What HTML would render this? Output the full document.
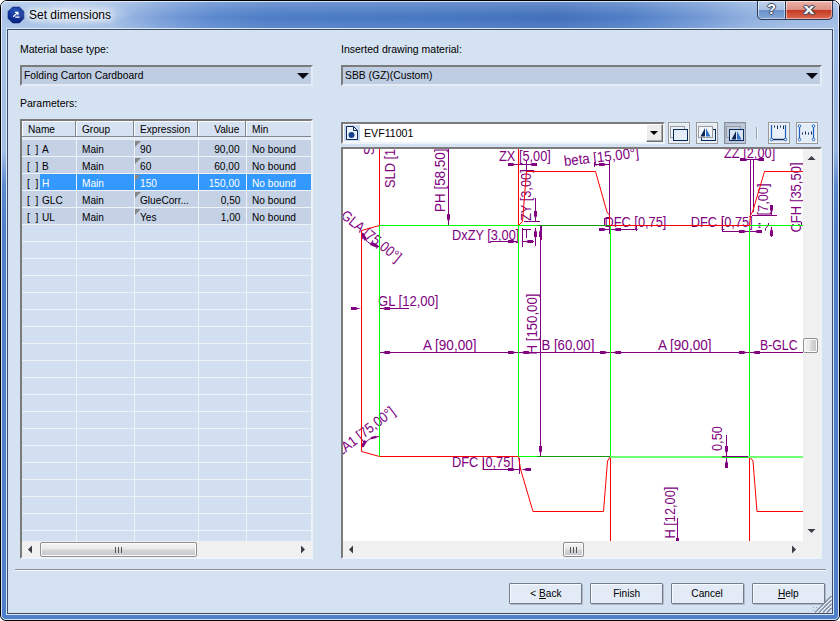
<!DOCTYPE html>
<html>
<head>
<meta charset="utf-8">
<title>Set dimensions</title>
<style>
html,body{margin:0;padding:0;}
body{width:840px;height:621px;overflow:hidden;position:relative;background:#fff;font-family:"Liberation Sans",sans-serif;font-size:11px;color:#000;}
.abs{position:absolute;}
#frame{left:0;top:0;width:838px;height:619px;border:1px solid #000;border-radius:7px 7px 6px 6px;background:linear-gradient(to bottom,#a6c1e6 0,#a3bfe5 150px,#5c89cf 185px,#4f7fc8 230px,#4f7fc8 100%);overflow:hidden;}
#frameR{left:800px;top:0;width:38px;height:619px;background:linear-gradient(to bottom,#9dbae3 0,#98b6e1 150px,#5c89cf 185px,#4f7fc8 230px,#4f7fc8 100%);}
#titlebg{left:0;top:0;width:838px;height:28px;background:linear-gradient(to right,#a9c3e7 0,#a3bfe5 13%,#7a9fd8 19%,#5c89cf 25%,#4d7dc6 32%,#4777c2 52%,#4170bb 66%,#4f7ec6 75%,#7097d4 83%,#8eafde 89%,#9dbae3 94%,#a0bce4 100%);}
#titlehi{left:0;top:0;width:838px;height:28px;background:linear-gradient(to bottom,rgba(255,255,255,.22) 0,rgba(255,255,255,.06) 40%,rgba(255,255,255,0) 60%,rgba(255,255,255,.10) 100%);}
#titlefade{left:0;top:28px;width:838px;height:8px;}
#frame2{left:1px;top:1px;width:836px;height:617px;border:1px solid rgba(235,243,252,.85);border-radius:6px 6px 5px 5px;}
#clientedge{left:6px;top:28px;width:826px;height:585px;border:1px solid #dbe8f8;}
#client{left:7px;top:29px;width:824px;height:583px;border:1px solid #3c4c66;background:#d5e2f2;}
#title{left:29px;top:8px;font-size:12px;line-height:15px;color:#000;white-space:nowrap;text-shadow:0 0 6px #fff,0 0 6px #fff,0 0 10px #fff;}
.capg{text-align:center;color:#fff;font-weight:bold;line-height:17px;text-shadow:-1px 0 #45506a,1px 0 #45506a,0 -1px #45506a,0 1px #45506a,0 0 2px #222;}
.lbl{font-size:11px;line-height:13px;white-space:nowrap;}
.lbl.t{transform:scaleX(.955);}
.combo .t{transform:scaleX(.94);}
.combo{height:17px;border:2px solid;border-color:#7b7b7b #e4ebf5 #e4ebf5 #7b7b7b;background:#bfcde2;}
.combo span{position:absolute;left:2px;top:2px;font-size:11px;line-height:13px;white-space:nowrap;}
.arrow{width:0;height:0;border-left:6px solid transparent;border-right:6px solid transparent;border-top:6px solid #0a0a14;}
/* table */
#tbl{left:20px;top:119px;width:289px;height:436px;border:2px solid;border-color:#7b7b7b #eef3fa #eef3fa #7b7b7b;background:#d2dff0;overflow:hidden;}
.hdr{top:0;height:15px;background:#d6e2f2;border-right:1px solid #808894;border-bottom:1px solid #808894;box-shadow:inset 1px 1px 0 #fbfdff;font-size:11px;line-height:17px;z-index:2;}
.hdr:nth-child(6){border-right:none;width:65px !important;}
#hband{left:0;top:16px;width:289px;height:3px;background:#e6edf7;}
.row{left:0;width:289px;height:16px;border-bottom:1px solid #eef3fa;font-size:11px;line-height:16px;}
.cell{position:absolute;top:0;height:16px;line-height:18px;white-space:nowrap;overflow:hidden;}
.vline{top:16px;width:1px;height:405px;background:#eef3fa;z-index:1;}
.tri{position:absolute;left:0;top:1px;width:0;height:0;border-top:6px solid #868686;border-right:6px solid transparent;}
.row.data{background:#c5d2e6;}
.row.sel{background:#3399ff;color:#fff;}
.row.sel .c0{background:#c5d2e6;color:#000;}
.row.sel .c0 .nm{background:#3399ff;color:#fff;}
.br{margin-left:5px;}
.t{display:inline-block;transform:scaleX(.92);transform-origin:0 50%;white-space:nowrap;}
.tr{transform-origin:100% 50%;}
.tc{transform-origin:50% 50%;}
.nm{display:inline-block;margin-left:1px;padding-left:2px;height:16px;vertical-align:top;}
.row.sel .nm{width:35px;}
.grip{width:7px;height:6px;background:linear-gradient(to right,#555 0,#555 1px,transparent 1px,transparent 3px,#555 3px,#555 4px,transparent 4px,transparent 6px,#555 6px,#555 7px);}
.tb{width:20px;height:20px;border:1px solid #9a9a9a;background:#e4ecf6;box-shadow:inset 0 0 0 1px #eef3fa;}
.tb.on{background:#bcc8dc;border-color:#8a8f9a;box-shadow:inset 1px 1px 0 #aab6ca;}
.tb svg{position:absolute;left:-1px;top:0;}
.thumbv{border:1px solid #8e8f90;border-radius:2px;background:linear-gradient(to right,#f5f5f5 0,#e9e9ea 45%,#d6d6d8 55%,#c6c7c9 100%);box-shadow:inset 0 0 0 1px #fcfcfc;}
.btn{top:583px;width:71px;height:19px;border:1px solid #767c88;border-radius:1px;background:#e3ebf7;box-shadow:inset 1px 1px 0 #f8fbff,1px 1px 0 #aeb9cb;font-size:11px;line-height:19px;text-align:center;}
.sbh{background:#f0f0f0;}
.thumb{border:1px solid #8e8f90;border-radius:2px;background:linear-gradient(to bottom,#f5f5f5 0,#e9e9ea 45%,#d6d6d8 55%,#c6c7c9 100%);box-shadow:inset 0 0 0 1px #fcfcfc;}
</style>
</head>
<body>
<div id="frame" class="abs"><div id="frameR" class="abs"></div><div id="titlebg" class="abs"></div><div id="titlehi" class="abs"></div></div>
<div id="frame2" class="abs"></div>
<div id="clientedge" class="abs"></div>
<div id="client" class="abs"></div>

<!-- title bar -->
<svg class="abs" style="left:7px;top:6px" width="18" height="18" viewBox="0 0 18 18">
  <defs><radialGradient id="ig" cx="45%" cy="25%" r="85%"><stop offset="0" stop-color="#2a56b8"/><stop offset="0.6" stop-color="#0d2f96"/><stop offset="1" stop-color="#061a6a"/></radialGradient></defs>
  <path d="M5.6 1 H12.4 L17 5.6 V12.4 L12.4 17 H5.6 L1 12.4 V5.6 Z" fill="url(#ig)" stroke="#0a2278" stroke-width="0.6" stroke-linejoin="round"/>
  <path d="M6.2 10.8 L10.6 6.6 M8 6.3 H10.9 V9.2 M8.3 11.2 H12.6" stroke="#fff" stroke-width="1.25" fill="none"/>
</svg>
<div class="abs" style="left:14px;top:2px;width:118px;height:25px;background:radial-gradient(ellipse at center,rgba(255,255,255,.5) 0,rgba(255,255,255,.28) 40%,rgba(255,255,255,0) 72%);"></div>
<div id="title" class="abs">Set dimensions</div>

<!-- caption buttons -->
<div id="capbtns" class="abs" style="left:757px;top:1px;width:74px;height:18px;border:1px solid #2a3a58;border-top:none;border-radius:0 0 5px 5px;overflow:hidden;background:#2a3a58;">
  <div class="abs" style="left:0;top:0;width:27px;height:18px;background:linear-gradient(to bottom,#c0d2ec 0,#a9c0e2 50%,#6c91cb 52%,#86a8d9 100%);box-shadow:inset 1px 1px 0 rgba(255,255,255,.6),inset -1px -1px 0 rgba(255,255,255,.45);border-radius:0 0 0 4px;"></div>
  <div class="abs" style="left:28px;top:0;width:46px;height:18px;background:linear-gradient(to bottom,#edb4ab 0,#dc8d82 50%,#c63a23 52%,#dc6a52 100%);box-shadow:inset 1px 1px 0 rgba(255,255,255,.5),inset -1px -1px 0 rgba(255,255,255,.45);border-radius:0 0 4px 0;"></div>
  <div class="abs capg" style="left:0;width:27px;top:0px;font-size:14px;">?</div>
  <div class="abs capg" style="left:28px;width:46px;top:-1px;font-size:15px;transform:scaleX(1.3);">x</div>
</div>

<!-- left column -->
<div class="abs lbl t" style="left:20px;top:43px;">Material base type:</div>
<div class="abs combo" style="left:20px;top:65px;width:289px;"><span class="t">Folding Carton Cardboard</span><div class="abs arrow" style="left:275px;top:6px;"></div></div>
<div class="abs lbl t" style="left:20px;top:97px;">Parameters:</div>

<div id="tbl" class="abs">
  <div id="hband" class="abs"></div>
  <div class="abs hdr" style="left:0px;width:53px;"><span class="t" style="margin-left:6px">Name</span></div>
  <div class="abs hdr" style="left:54px;width:57px;"><span class="t" style="margin-left:6px">Group</span></div>
  <div class="abs hdr" style="left:112px;width:63px;"><span class="t" style="margin-left:6px">Expression</span></div>
  <div class="abs hdr" style="left:176px;width:47px;text-align:right;"><span class="t tr" style="margin-right:6px">Value</span></div>
  <div class="abs hdr" style="left:224px;width:65px;"><span class="t" style="margin-left:6px">Min</span></div>
  <div class="abs vline" style="left:54px;"></div>
  <div class="abs vline" style="left:112px;"></div>
  <div class="abs vline" style="left:176px;"></div>
  <div class="abs vline" style="left:224px;"></div>
  <div class="abs row data" style="top:19px;"><div class="cell c0" style="left:0;width:54px;"><span class="br t">[&nbsp;&nbsp;]</span><span class="nm"><span class="t">A</span></span></div><div class="cell" style="left:55px;width:57px;"><span class="t" style="margin-left:5px">Main</span></div><div class="cell" style="left:113px;width:63px;"><i class="tri"></i><span class="t" style="margin-left:5px">90</span></div><div class="cell" style="left:177px;width:47px;text-align:right;"><span class="t tr" style="margin-right:6px">90,00</span></div><div class="cell" style="left:225px;width:65px;"><span class="t" style="margin-left:5px">No bound</span></div></div>
  <div class="abs row data" style="top:36px;"><div class="cell c0" style="left:0;width:54px;"><span class="br t">[&nbsp;&nbsp;]</span><span class="nm"><span class="t">B</span></span></div><div class="cell" style="left:55px;width:57px;"><span class="t" style="margin-left:5px">Main</span></div><div class="cell" style="left:113px;width:63px;"><i class="tri"></i><span class="t" style="margin-left:5px">60</span></div><div class="cell" style="left:177px;width:47px;text-align:right;"><span class="t tr" style="margin-right:6px">60,00</span></div><div class="cell" style="left:225px;width:65px;"><span class="t" style="margin-left:5px">No bound</span></div></div>
  <div class="abs row sel" style="top:53px;"><div class="cell c0" style="left:0;width:54px;"><span class="br t">[&nbsp;&nbsp;]</span><span class="nm"><span class="t">H</span></span></div><div class="cell" style="left:55px;width:57px;"><span class="t" style="margin-left:5px">Main</span></div><div class="cell" style="left:113px;width:63px;"><i class="tri"></i><span class="t" style="margin-left:5px">150</span></div><div class="cell" style="left:177px;width:47px;text-align:right;"><span class="t tr" style="margin-right:6px">150,00</span></div><div class="cell" style="left:225px;width:65px;"><span class="t" style="margin-left:5px">No bound</span></div></div>
  <div class="abs row data" style="top:70px;"><div class="cell c0" style="left:0;width:54px;"><span class="br t">[&nbsp;&nbsp;]</span><span class="nm"><span class="t">GLC</span></span></div><div class="cell" style="left:55px;width:57px;"><span class="t" style="margin-left:5px">Main</span></div><div class="cell" style="left:113px;width:63px;"><i class="tri"></i><span class="t" style="margin-left:5px">GlueCorr...</span></div><div class="cell" style="left:177px;width:47px;text-align:right;"><span class="t tr" style="margin-right:6px">0,50</span></div><div class="cell" style="left:225px;width:65px;"><span class="t" style="margin-left:5px">No bound</span></div></div>
  <div class="abs row data" style="top:87px;"><div class="cell c0" style="left:0;width:54px;"><span class="br t">[&nbsp;&nbsp;]</span><span class="nm"><span class="t">UL</span></span></div><div class="cell" style="left:55px;width:57px;"><span class="t" style="margin-left:5px">Main</span></div><div class="cell" style="left:113px;width:63px;"><i class="tri"></i><span class="t" style="margin-left:5px">Yes</span></div><div class="cell" style="left:177px;width:47px;text-align:right;"><span class="t tr" style="margin-right:6px">1,00</span></div><div class="cell" style="left:225px;width:65px;"><span class="t" style="margin-left:5px">No bound</span></div></div>
  <div class="abs row" style="top:104px;"></div>
  <div class="abs row" style="top:121px;"></div>
  <div class="abs row" style="top:138px;"></div>
  <div class="abs row" style="top:155px;"></div>
  <div class="abs row" style="top:172px;"></div>
  <div class="abs row" style="top:189px;"></div>
  <div class="abs row" style="top:206px;"></div>
  <div class="abs row" style="top:223px;"></div>
  <div class="abs row" style="top:240px;"></div>
  <div class="abs row" style="top:257px;"></div>
  <div class="abs row" style="top:274px;"></div>
  <div class="abs row" style="top:291px;"></div>
  <div class="abs row" style="top:308px;"></div>
  <div class="abs row" style="top:325px;"></div>
  <div class="abs row" style="top:342px;"></div>
  <div class="abs row" style="top:359px;"></div>
  <div class="abs row" style="top:376px;"></div>
  <div class="abs row" style="top:393px;"></div>
  <div class="abs row" style="top:410px;"></div>
  <div class="abs sbh" style="left:0;top:420px;width:289px;height:16px;">
    <svg class="abs" style="left:5px;top:4px" width="6" height="9" viewBox="0 0 6 9"><path d="M5 0.5 L5 8.5 L1 4.5 Z" fill="#3a3d44"/></svg>
    <div class="abs thumb" style="left:18px;top:1px;width:155px;height:13px;"><div class="abs grip" style="left:74px;top:4px;"></div></div>
    <svg class="abs" style="left:278px;top:4px" width="6" height="9" viewBox="0 0 6 9"><path d="M1 0.5 L1 8.5 L5 4.5 Z" fill="#3a3d44"/></svg>
  </div>
</div>

<!-- right column -->
<div class="abs lbl t" style="left:341px;top:43px;">Inserted drawing material:</div>
<div class="abs combo" style="left:341px;top:65px;width:477px;"><span class="t">SBB (GZ)(Custom)</span><div class="abs arrow" style="left:463px;top:6px;"></div></div>


<!-- drawing combo -->
<div class="abs" style="left:341px;top:122px;width:320px;height:18px;border:2px solid;border-color:#7b7b7b #eef3fa #eef3fa #7b7b7b;background:#fff;">
  <div class="abs" style="left:1px;top:1px;width:16px;height:16px;background:#c9d9ee;"></div>
  <svg class="abs" style="left:1px;top:1px" width="16" height="16" viewBox="0 0 16 16">
    <path d="M2.5 1.5 H9.5 L13.5 5.5 V14.5 H2.5 Z" fill="#eef3fa" stroke="#0b2a5c" stroke-width="1"/>
    <path d="M9.5 1.5 V5.5 H13.5" fill="none" stroke="#0b2a5c" stroke-width="1"/>
    <circle cx="7.5" cy="10" r="3" fill="#123e8c"/>
  </svg>
  <span class="abs t" style="left:21px;top:3px;font-size:11px;line-height:13px;transform:scaleX(.965);">EVF11001</span>
  <div class="abs" style="left:303px;top:0;width:15px;height:16px;border:1px solid;border-color:#fff #707070 #707070 #fff;background:#ececec;box-shadow:inset -1px -1px 0 #a8a8a8;">
    <div class="abs" style="left:3px;top:6px;width:0;height:0;border-left:4px solid transparent;border-right:4px solid transparent;border-top:4px solid #000;"></div>
  </div>
</div>

<!-- toolbar buttons -->
<div class="abs tb" style="left:668px;top:122px;">
  <svg width="20" height="20" viewBox="0 0 20 20"><rect x="2.5" y="3.5" width="14" height="11" fill="#e9f0f8" stroke="#9c9c9c"/><rect x="5.5" y="6.5" width="14" height="11" fill="#e4edf7" stroke="#0b2a5c" stroke-width="1"/></svg>
</div>
<div class="abs tb" style="left:696px;top:122px;">
  <svg width="20" height="20" viewBox="0 0 20 20"><rect x="5.5" y="6.5" width="14" height="11" fill="#e4edf7" stroke="#0b2a5c" stroke-width="1"/><rect x="2.5" y="3.5" width="14" height="11" fill="#f1f5fa" stroke="#9c9c9c"/><path d="M9 5 V13.5 H4.5 Z" fill="#0b2350"/><path d="M10 5 V13.5 H14.5 Z" fill="#2d6fc4"/></svg>
</div>
<div class="abs tb on" style="left:724px;top:122px;">
  <svg width="20" height="20" viewBox="0 0 20 20"><rect x="2.5" y="3.5" width="14" height="11" fill="#c3cede" stroke="#9c9c9c"/><rect x="5.5" y="6.5" width="14" height="11" fill="#d9e4f2" stroke="#0b2a5c" stroke-width="1"/><path d="M12 8 V16.5 H7.5 Z" fill="#0b2350"/><path d="M13 8 V16.5 H17.5 Z" fill="#2d6fc4"/></svg>
</div>
<div class="abs" style="left:756px;top:127px;width:1px;height:12px;background:#9aa3b0;"></div>
<div class="abs" style="left:757px;top:127px;width:1px;height:12px;background:#f2f6fb;"></div>
<div class="abs tb" style="left:768px;top:122px;">
  <svg width="20" height="20" viewBox="0 0 20 20"><path d="M3.5 2 V16.5 H17.5 V2" fill="#e9f0f8" stroke="#1e5fbe" stroke-width="1.2"/><path d="M3.5 16.5 H17.5" stroke="#0b2a5c" stroke-width="1.4"/><path d="M6.5 2.5 V4.5 M9.5 2.5 V6 M12.5 2.5 V4.5 M15.5 2.5 V6" stroke="#0b2a5c" stroke-width="1"/><circle cx="3.5" cy="16.5" r="1.3" fill="#fff" stroke="#1e5fbe" stroke-width="0.9"/><circle cx="17.5" cy="16.5" r="1.3" fill="#fff" stroke="#1e5fbe" stroke-width="0.9"/></svg>
</div>
<div class="abs tb" style="left:796px;top:122px;">
  <svg width="20" height="20" viewBox="0 0 20 20"><path d="M3.5 3 V16.5 M17.5 3 V16.5" stroke="#1e5fbe" stroke-width="1.2"/><path d="M6.5 9.5 V11.5 M9.5 8.5 V11.5 M12.5 9.5 V11.5 M15.5 8.5 V11.5" stroke="#0b2a5c" stroke-width="1"/><circle cx="3.5" cy="3" r="1.3" fill="#fff" stroke="#1e5fbe" stroke-width="0.9"/><circle cx="17.5" cy="3" r="1.3" fill="#fff" stroke="#1e5fbe" stroke-width="0.9"/><circle cx="3.5" cy="16.5" r="1.3" fill="#fff" stroke="#1e5fbe" stroke-width="0.9"/><circle cx="17.5" cy="16.5" r="1.3" fill="#fff" stroke="#1e5fbe" stroke-width="0.9"/></svg>
</div>

<!-- drawing panel -->
<div id="panel" class="abs" style="left:341px;top:147px;width:477px;height:408px;border:2px solid;border-color:#7b7b7b #eef3fa #eef3fa #7b7b7b;background:#eaeff6;"></div>
<svg id="dwg" class="abs" style="left:343px;top:149px;" width="460" height="392" viewBox="343 149 460 392">
  <rect x="343" y="149" width="460" height="392" fill="#fff"/>
  <text x="373.5" y="155" font-size="14.5" fill="#800080" text-anchor="start" transform="rotate(-90 373.5 155)" textLength="8.5" lengthAdjust="spacingAndGlyphs">S</text>
  <text x="395" y="188" font-size="14.5" fill="#800080" text-anchor="start" transform="rotate(-90 395 188)" textLength="39.1" lengthAdjust="spacingAndGlyphs">SLD [1</text>
  <text x="445" y="212" font-size="14.5" fill="#800080" text-anchor="start" transform="rotate(-90 445 212)" textLength="63.5" lengthAdjust="spacingAndGlyphs">PH [58,50]</text>
  <text x="499" y="161" font-size="14.5" fill="#800080" text-anchor="start" textLength="51.9" lengthAdjust="spacingAndGlyphs">ZX [5,00]</text>
  <text x="531" y="221" font-size="14.5" fill="#800080" text-anchor="start" transform="rotate(-90 531 221)" textLength="51.7" lengthAdjust="spacingAndGlyphs">ZY [3,00]</text>
  <text x="564.5" y="166" font-size="14.5" fill="#800080" text-anchor="start" transform="rotate(-6.5 564.5 166)" textLength="75.5" lengthAdjust="spacingAndGlyphs">beta [15,00°]</text>
  <text x="724" y="157.5" font-size="14.5" fill="#800080" text-anchor="start" textLength="51.2" lengthAdjust="spacingAndGlyphs">ZZ [2,00]</text>
  <text x="768" y="215.5" font-size="14.5" fill="#800080" text-anchor="start" transform="rotate(-90 768 215.5)" textLength="32.0" lengthAdjust="spacingAndGlyphs">[7,00]</text>
  <path d="M765.5 230.5 V228.5 L768.5 225 V223" stroke="#800080" stroke-width="1" fill="none" />
  <path d="M759.5 223 V232" stroke="#800080" stroke-width="2" fill="none" stroke-dasharray="1.5 2"/>
  <text x="800.8" y="232.5" font-size="14.5" fill="#800080" text-anchor="start" transform="rotate(-90 800.8 232.5)" textLength="70" lengthAdjust="spacingAndGlyphs">CFH [35,50]</text>
  <text x="604.5" y="226.5" font-size="14.5" fill="#800080" text-anchor="start" textLength="61.9" lengthAdjust="spacingAndGlyphs">DFC [0,75]</text>
  <text x="690.8" y="226.5" font-size="14.5" fill="#800080" text-anchor="start" textLength="61.9" lengthAdjust="spacingAndGlyphs">DFC [0,75]</text>
  <text x="452" y="239.5" font-size="14.5" fill="#800080" text-anchor="start" textLength="67.3" lengthAdjust="spacingAndGlyphs">DxZY [3,00]</text>
  <text x="340" y="217" font-size="14.5" fill="#800080" text-anchor="start" transform="rotate(39 340 217)" textLength="72.7" lengthAdjust="spacingAndGlyphs">GLA [75,00°]</text>
  <text x="378" y="306" font-size="14.5" fill="#800080" text-anchor="start" textLength="60.5" lengthAdjust="spacingAndGlyphs">GL [12,00]</text>
  <text x="423" y="349.5" font-size="14.5" fill="#800080" text-anchor="start" textLength="53.5" lengthAdjust="spacingAndGlyphs">A [90,00]</text>
  <text x="536.8" y="354.5" font-size="14.5" fill="#800080" text-anchor="start" transform="rotate(-90 536.8 354.5)" textLength="61" lengthAdjust="spacingAndGlyphs">H [150,00]</text>
  <text x="541.4" y="349.5" font-size="14.5" fill="#800080" text-anchor="start" textLength="53" lengthAdjust="spacingAndGlyphs">B [60,00]</text>
  <text x="658" y="349.5" font-size="14.5" fill="#800080" text-anchor="start" textLength="53.5" lengthAdjust="spacingAndGlyphs">A [90,00]</text>
  <text x="760" y="349.5" font-size="14.5" fill="#800080" text-anchor="start" textLength="37.5" lengthAdjust="spacingAndGlyphs">B-GLC</text>
  <text x="722" y="451" font-size="14.5" fill="#800080" text-anchor="start" transform="rotate(-90 722 451)" textLength="24.9" lengthAdjust="spacingAndGlyphs">0,50</text>
  <text x="332.5" y="463" font-size="14.5" fill="#800080" text-anchor="start" transform="rotate(-38 332.5 463)" textLength="80.5" lengthAdjust="spacingAndGlyphs">GLA1 [75,00°]</text>
  <text x="452" y="466.5" font-size="14.5" fill="#800080" text-anchor="start" textLength="61.9" lengthAdjust="spacingAndGlyphs">DFC [0,75]</text>
  <text x="674.5" y="538.5" font-size="14.5" fill="#800080" text-anchor="start" transform="rotate(-90 674.5 538.5)" textLength="51.9" lengthAdjust="spacingAndGlyphs">H [12,00]</text>
  <rect x="448" y="149" width="1" height="76" fill="#800080"/>
  <polygon points="448.5,224 447.7,220 447,219 447,214 450,214 450,219 449.3,220" fill="#800080"/>
  <rect x="508" y="164" width="28" height="1" fill="#800080"/>
  <polygon points="518,164.5 514,163.7 513,163 508,163 508,166 513,166 514,165.3" fill="#800080"/>
  <polygon points="527,164.5 531,163.7 532,163 537,163 537,166 532,166 531,165.3" fill="#800080"/>
  <rect x="526" y="160" width="1" height="12" fill="#800080"/>
  <rect x="535" y="198" width="1" height="24" fill="#800080"/>
  <polygon points="535.5,221 534.7,217 534,216 534,211 537,211 537,216 536.3,217" fill="#800080"/>
  <rect x="524" y="221" width="16" height="1" fill="#800080"/>
  <rect x="535" y="228" width="1" height="18" fill="#800080"/>
  <polygon points="535.5,227 534.7,231 534,232 534,237 537,237 537,232 536.3,231" fill="#800080"/>
  <rect x="541" y="226" width="1" height="14" fill="#800080"/>
  <rect x="490" y="241" width="27" height="1" fill="#800080"/>
  <polygon points="518,241.5 514,240.7 513,240 508,240 508,243 513,243 514,242.3" fill="#800080"/>
  <polygon points="523,241.5 527,240.7 528,240 533,240 533,243 528,243 527,242.3" fill="#800080"/>
  <rect x="522" y="228" width="1" height="19" fill="#800080"/>
  <rect x="522" y="241" width="12" height="1" fill="#800080"/>
  <rect x="526" y="229" width="1" height="9" fill="#800080"/>
  <rect x="522" y="229" width="9" height="1" fill="#800080"/>
  <rect x="594" y="164" width="16" height="1" fill="#800080"/>
  <polygon points="609,164.5 605,163.7 604,163 599,163 599,166 604,166 605,165.3" fill="#800080"/>
  <rect x="609" y="160" width="1" height="55" fill="#800080"/>
  <rect x="594" y="162" width="1" height="5" fill="#800080"/>
  <rect x="600" y="229" width="37" height="1" fill="#800080"/>
  <polygon points="609,229.5 605,228.7 604,228 599,228 599,231 604,231 605,230.3" fill="#800080"/>
  <polygon points="611,229.5 615,228.7 616,228 621,228 621,231 616,231 615,230.3" fill="#800080"/>
  <rect x="609" y="226" width="1" height="8" fill="#800080"/>
  <rect x="636" y="226" width="1" height="5" fill="#800080"/>
  <rect x="604" y="218" width="1" height="8" fill="#800080"/>
  <rect x="604" y="218" width="6" height="1" fill="#800080"/>
  <rect x="722" y="231" width="39" height="1" fill="#800080"/>
  <rect x="722" y="219" width="1" height="13" fill="#800080"/>
  <polygon points="749,231.5 745,230.7 744,230 739,230 739,233 744,233 745,232.3" fill="#800080"/>
  <polygon points="752,231.5 756,230.7 757,230 762,230 762,233 757,233 756,232.3" fill="#800080"/>
  <rect x="740" y="159" width="24" height="1" fill="#800080"/>
  <polygon points="750,159.5 746,158.7 745,158 740,158 740,161 745,161 746,160.3" fill="#800080"/>
  <polygon points="754,159.5 758,158.7 759,158 764,158 764,161 759,161 758,160.3" fill="#800080"/>
  <rect x="750" y="159" width="1" height="57" fill="#800080"/>
  <rect x="753" y="159" width="1" height="53" fill="#800080"/>
  <rect x="752" y="215" width="25" height="1" fill="#800080"/>
  <rect x="771" y="205" width="1" height="11" fill="#800080"/>
  <polygon points="771.5,215 770.7,211 770,210 770,205 773,205 773,210 772.3,211" fill="#800080"/>
  <rect x="771" y="227" width="1" height="10" fill="#800080"/>
  <polygon points="771.5,226 770.7,230 770,231 770,236 773,236 773,231 772.3,230" fill="#800080"/>
  <rect x="801" y="222" width="1" height="3" fill="#800080"/>
  <rect x="380" y="308" width="29" height="1" fill="#800080"/>
  <polygon points="380,308.5 384,307.7 385,307 390,307 390,310 385,310 384,309.3" fill="#800080"/>
  <rect x="351" y="308" width="8" height="1" fill="#800080"/>
  <polygon points="361,308.5 357,307.7 356,307 351,307 351,310 356,310 357,309.3" fill="#800080"/>
  <rect x="380" y="352" width="423" height="1" fill="#800080"/>
  <polygon points="380,352.5 384,351.7 385,351 390,351 390,354 385,354 384,353.3" fill="#800080"/>
  <polygon points="519,352.5 523,351.7 524,351 529,351 529,354 524,354 523,353.3" fill="#800080"/>
  <polygon points="611,352.5 615,351.7 616,351 621,351 621,354 616,354 615,353.3" fill="#800080"/>
  <polygon points="750,352.5 754,351.7 755,351 760,351 760,354 755,354 754,353.3" fill="#800080"/>
  <polygon points="518,352.5 514,351.7 513,351 508,351 508,354 513,354 514,353.3" fill="#800080"/>
  <polygon points="610,352.5 606,351.7 605,351 600,351 600,354 605,354 606,353.3" fill="#800080"/>
  <polygon points="749,352.5 745,351.7 744,351 739,351 739,354 744,354 745,353.3" fill="#800080"/>
  <rect x="540" y="226" width="1" height="231" fill="#800080"/>
  <polygon points="540.5,456 539.7,452 539,451 539,446 542,446 542,451 541.3,452" fill="#800080"/>
  <polygon points="540.5,227 539.7,231 539,232 539,237 542,237 542,232 541.3,231" fill="#800080"/>
  <rect x="726" y="435" width="1" height="33" fill="#800080"/>
  <polygon points="726.5,456 725.7,452 725,451 725,446 728,446 728,451 727.3,452" fill="#800080"/>
  <polygon points="726.5,458 725.7,462 725,463 725,468 728,468 728,463 727.3,462" fill="#800080"/>
  <rect x="722" y="456" width="26" height="1" fill="#800080"/>
  <rect x="483" y="469" width="38" height="1" fill="#800080"/>
  <rect x="483" y="459" width="1" height="11" fill="#800080"/>
  <polygon points="518,469.5 514,468.7 513,468 508,468 508,471 513,471 514,470.3" fill="#800080"/>
  <polygon points="521,469.5 525,468.7 526,468 531,468 531,471 526,471 525,470.3" fill="#800080"/>
  <rect x="519" y="458" width="1" height="16" fill="#800080"/>
  <rect x="677" y="518" width="1" height="23" fill="#800080"/>
  <polygon points="677.5,548 676.7,544 676,543 676,538 679,538 679,543 678.3,544" fill="#800080"/>
  <path d="M361.5 232 A19 19 0 0 0 379 246.5" stroke="#800080" stroke-width="1" fill="none" />
  <path d="M362 233.5 L366 240" stroke="#800080" stroke-width="3" fill="none" />
  <path d="M370.5 243.5 L377.5 246.3" stroke="#800080" stroke-width="3" fill="none" />
  <path d="M362 447.5 A19 19 0 0 1 379 436.5" stroke="#800080" stroke-width="1" fill="none" />
  <path d="M362.3 446.5 L365.5 441" stroke="#800080" stroke-width="3" fill="none" />
  <path d="M371 438.2 L376.5 436.8" stroke="#800080" stroke-width="2.4" fill="none" />
  <path d="M379.5 149 V225.5 L361.5 230.5 V451.5 L379.5 456.5 H518.5" stroke="#ff0000" stroke-width="1" fill="none" />
  <path d="M518.5 149 V225.5 L522.5 221.5 L526.5 171.5 H595.5 L607 212 L609.5 215 V225.5 H749.5 L750.5 215 L752.5 212 L764.5 171.5 H803" stroke="#ff0000" stroke-width="1" fill="none" />
  <path d="M518.5 456.5 L520.5 469 L533 511.5 H603.5 L607.5 461 L610.5 456.5 V541" stroke="#ff0000" stroke-width="1" fill="none" />
  <path d="M749.5 541 V456.5 L753 461 L757 511.5 H803" stroke="#ff0000" stroke-width="1" fill="none" />
  <path d="M379.5 225.5 V456.5" stroke="#00ff00" stroke-width="1" fill="none" />
  <path d="M379.5 225.5 H609" stroke="#00ff00" stroke-width="1" fill="none" />
  <path d="M750 225.5 H803" stroke="#00ff00" stroke-width="1" fill="none" />
  <path d="M518.5 225.5 V456.5" stroke="#00ff00" stroke-width="1" fill="none" />
  <path d="M610.5 226 V456.5" stroke="#00ff00" stroke-width="1" fill="none" />
  <path d="M749.5 226 V456.5" stroke="#00ff00" stroke-width="1" fill="none" />
  <path d="M518.5 456.5 H610" stroke="#00ff00" stroke-width="1" fill="none" />
  <rect x="610" y="456" width="193" height="2" fill="#70ff70"/>
  <rect x="537" y="225" width="73" height="1" fill="#129a12"/>
  <rect x="537" y="456" width="73" height="1" fill="#129a12"/>
  <rect x="722" y="456" width="26" height="1" fill="#800080"/>
  <rect x="722" y="457" width="26" height="1" fill="#00ff00"/>
</svg>
<!-- DRAWING-END -->
<!-- v scrollbar -->
<div class="abs sbh" style="left:803px;top:149px;width:17px;height:392px;">
  <svg class="abs" style="left:4px;top:6px" width="9" height="6" viewBox="0 0 9 6"><path d="M0.5 5 L8.5 5 L4.5 1 Z" fill="#3a3d44"/></svg>
  <div class="abs thumbv" style="left:0px;top:189px;width:13px;height:13px;"></div>
  <svg class="abs" style="left:4px;top:379px" width="9" height="6" viewBox="0 0 9 6"><path d="M0.5 1 L8.5 1 L4.5 5 Z" fill="#3a3d44"/></svg>
</div>
<!-- h scrollbar -->
<div class="abs sbh" style="left:343px;top:541px;width:460px;height:16px;">
  <svg class="abs" style="left:5px;top:4px" width="6" height="9" viewBox="0 0 6 9"><path d="M5 0.5 L5 8.5 L1 4.5 Z" fill="#3a3d44"/></svg>
  <div class="abs thumb" style="left:220px;top:1px;width:19px;height:13px;"><div class="abs grip" style="left:6px;top:4px;"></div></div>
  <svg class="abs" style="left:448px;top:4px" width="6" height="9" viewBox="0 0 6 9"><path d="M1 0.5 L1 8.5 L5 4.5 Z" fill="#3a3d44"/></svg>
</div>
<div class="abs" style="left:803px;top:541px;width:17px;height:16px;background:#f0f0f0;"></div>

<!-- bottom -->
<div class="abs" style="left:15px;top:569px;width:811px;height:1px;background:#8e9095;"></div>
<div class="abs" style="left:15px;top:570px;width:811px;height:1px;background:#f4f8fd;"></div>
<div class="abs btn" style="left:509px;"><span class="t tc">&lt; <u>B</u>ack</span></div>
<div class="abs btn" style="left:590px;"><span class="t tc">Finish</span></div>
<div class="abs btn" style="left:671px;"><span class="t tc">Cancel</span></div>
<div class="abs btn" style="left:752px;"><span class="t tc"><u>H</u>elp</span></div>
<svg class="abs" style="left:812px;top:594px" width="20" height="19" viewBox="0 0 20 19">
  <path d="M19.5 2 L3 18.5 M19.5 6 L7 18.5 M19.5 10 L11 18.5 M19.5 14 L15 18.5" stroke="#7f8a9c" stroke-width="1.4" fill="none"/>
  <path d="M19.5 3.5 L4.5 18.5 M19.5 7.5 L8.5 18.5 M19.5 11.5 L12.5 18.5" stroke="#f2f6fb" stroke-width="0.9" fill="none"/>
  <g fill="#9aa5b8"><rect x="1" y="13" width="1" height="1"/><rect x="4" y="13" width="1" height="1"/><rect x="7" y="13" width="1" height="1"/><rect x="1" y="16" width="1" height="1"/><rect x="4" y="16" width="1" height="1"/></g>
</svg>
</body>
</html>
